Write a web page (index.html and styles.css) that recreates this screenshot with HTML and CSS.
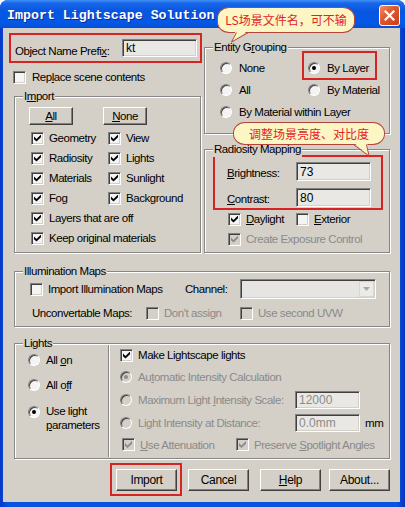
FILE: index.html
```html
<!DOCTYPE html>
<html>
<head>
<meta charset="utf-8">
<link rel="stylesheet" href="styles.css">
</head>
<body>
<div class="window">
  <div class="titlebar">
    <span class="title">Import Lightscape Solution</span>
    <span class="close"><svg width="11" height="11" viewBox="0 0 11 11"><path d="M1.5 1.5 L9.5 9.5 M9.5 1.5 L1.5 9.5" stroke="#fff" stroke-width="2.2" stroke-linecap="square"/></svg></span>
  </div>
  <div class="client">
    <div class="top">
      <div class="col-left">
        <div class="prefix">
          <span class="prefix-label">Object Name Prefi<u>x</u>:</span>
          <span class="edit prefix-edit">kt</span>
        </div>
        <div class="opt replace"><span class="cb"></span><span>Rep<u>l</u>ace scene contents</span></div>
        <div class="group g-import">
          <span class="legend">I<u>m</u>port</span>
          <div class="btn-row"><span class="btn small"><span><u>A</u>ll</span></span><span class="btn small"><span><u>N</u>one</span></span></div>
          <div class="import-grid">
            <div class="opt"><span class="cb on"></span><span>Geometry</span></div>
            <div class="opt"><span class="cb on"></span><span>View</span></div>
            <div class="opt"><span class="cb on"></span><span>Radiosity</span></div>
            <div class="opt"><span class="cb on"></span><span>Lights</span></div>
            <div class="opt"><span class="cb on"></span><span>Materials</span></div>
            <div class="opt"><span class="cb on"></span><span>Sunlight</span></div>
            <div class="opt"><span class="cb on"></span><span>Fog</span></div>
            <div class="opt"><span class="cb on"></span><span>Background</span></div>
            <div class="opt span2"><span class="cb on"></span><span>Layers that are off</span></div>
            <div class="opt span2"><span class="cb on"></span><span>Keep original materials</span></div>
          </div>
        </div>
      </div>
      <div class="col-right">
        <div class="group g-entity">
          <span class="legend">Entity G<u>r</u>ouping</span>
          <div class="radio-grid">
            <div class="ropt"><span class="rb"></span><span>None</span></div>
            <div class="ropt mark mark-layer"><span class="rb on"></span><span>By Layer</span></div>
            <div class="ropt"><span class="rb"></span><span>All</span></div>
            <div class="ropt"><span class="rb"></span><span>By Material</span></div>
            <div class="ropt span2"><span class="rb"></span><span>By Material within Layer</span></div>
          </div>
        </div>
        <div class="group g-rad">
          <span class="legend">Radiosity Mapping</span>
          <div class="rad-box">
            <span class="rlabel"><u>B</u>rightness:</span><span class="edit num">73</span>
            <span class="rlabel"><u>C</u>ontrast:</span><span class="edit num">80</span>
          </div>
          <div class="rad-checks">
            <div class="opt"><span class="cb on"></span><span><u>D</u>aylight</span></div>
            <div class="opt"><span class="cb"></span><span><u>E</u>xterior</span></div>
            <div class="opt span2 dis"><span class="cb on dis"></span><span>Create Exposure Control</span></div>
          </div>
        </div>
      </div>
    </div>

    <div class="group g-illum">
      <span class="legend">Illumination Maps</span>
      <div class="ill-row ill-row1">
        <div class="opt w155"><span class="cb"></span><span>Import Illumination Maps</span></div>
        <span class="w55">Channel:</span>
        <span class="combo"><span class="combo-btn"><svg width="7" height="4" viewBox="0 0 7 4"><path d="M0 0 H7 L3.5 4 Z" fill="#a8a8a8"/></svg></span></span>
      </div>
      <div class="ill-row ill-row2">
        <span class="w114">Unconvertable Maps:</span>
        <div class="opt dis w94"><span class="cb dis"></span><span>Don't assign</span></div>
        <div class="opt dis"><span class="cb dis"></span><span>Use second UVW</span></div>
      </div>
    </div>

    <div class="group g-lights">
      <span class="legend">Lights</span>
      <div class="lights-left">
        <div class="ropt l1"><span class="rb"></span><span>All <u>o</u>n</span></div>
        <div class="ropt l2"><span class="rb"></span><span>All o<u>f</u>f</span></div>
        <div class="ropt l3"><span class="rb on"></span><span>Use light<br><u>p</u>arameters</span></div>
      </div>
      <div class="lights-right">
        <div class="opt"><span class="cb on"></span><span>Make Lightscape lights</span></div>
        <div class="ropt dis"><span class="rb on dis"></span><span>Au<u>t</u>omatic Intensity Calculation</span></div>
        <div class="ropt dis"><span class="rb dis"></span><span class="w151">Maximum Light <u>I</u>ntensity Scale:</span><span class="edit dis-edit">12000</span></div>
        <div class="ropt dis"><span class="rb dis"></span><span class="w151">Light Intensity at Distance:</span><span class="edit dis-edit">0.0mm</span><span class="mm">mm</span></div>
        <div class="opt dis last"><span class="cb on dis"></span><span class="w91"><u>U</u>se Attenuation</span><span class="cb on dis"></span><span>Preserve <u>S</u>potlight Angles</span></div>
      </div>
    </div>

    <div class="buttons">
      <span class="btn big mark mark-import">Import</span>
      <span class="btn big">Cancel</span>
      <span class="btn big"><span><u>H</u>elp</span></span>
      <span class="btn big">About...</span>
    </div>
  </div>

  <div class="callout c1">LS场景文件名，可不输</div>
  <svg class="tail t1" width="30" height="15" viewBox="0 0 30 15"><path d="M11 0 H24 L6.5 12 Z" fill="#fcf6c4"/><path d="M11.5 2.5 L6.5 12 L23.5 2.5" fill="none" stroke="#b5443a" stroke-width="1"/></svg>
  <div class="callout c2">调整场景亮度、对比度</div>
  <svg class="tail t2" width="25" height="16" viewBox="0 0 25 16"><path d="M3 0 H17 L19 14 Z" fill="#fcf6c4"/><path d="M3.5 2.5 L19 14 L16.5 2.5" fill="none" stroke="#b5443a" stroke-width="1"/></svg>
</div>
</body>
</html>
```

FILE: styles.css
```css
html, body {
  margin: 0;
  padding: 0;
  background: #fff;
}

.window {
  position: relative;
  width: 405px;
  height: 507px;
  background: linear-gradient(to right, #0639c8, #0a52e0 2%, #0a52e0 98%, #0634bd);
  border-radius: 8px 8px 0 0;
  display: flex;
  flex-direction: column;
  overflow: hidden;
  font-family: "Liberation Sans", Arial, sans-serif;
  font-size: 11.5px;
  letter-spacing: -0.45px;
  color: #000;
  white-space: nowrap;
}

.titlebar {
  height: 28px;
  flex: none;
  box-sizing: border-box;
  display: flex;
  align-items: flex-start;
  justify-content: space-between;
  padding: 5px 5px 0 7px;
  background: linear-gradient(to bottom, #3f8ff7 0%, #1866e8 12%, #0656e0 40%, #0558e6 80%, #0650d8 100%);
  letter-spacing: 0;
}

.title {
  font-family: "Liberation Mono", monospace;
  font-weight: bold;
  font-size: 13.3px;
  line-height: 21px;
  color: #fff;
  text-shadow: 1px 1px 0 #0b2c9a;
}

.close {
  width: 21px;
  height: 21px;
  box-sizing: border-box;
  border: 1px solid #fff;
  border-radius: 3px;
  background: linear-gradient(135deg, #f08a62 0%, #e0562c 45%, #c93e1a 100%);
  display: flex;
  align-items: center;
  justify-content: center;
}

.client {
  flex: 1;
  margin: 0 5px 5px 3px;
  background: #d4d0c8;
  display: flex;
  flex-direction: column;
}

u { text-decoration: underline; text-underline-offset: 1px; }

/* top area */
.top {
  display: grid;
  grid-template-columns: 193px 186px;
  column-gap: 2px;
  padding-left: 6px;
}

.prefix {
  margin-top: 5px;
  height: 30px;
  box-sizing: border-box;
  border: 2px solid #d62424;
  display: flex;
  align-items: center;
  padding: 0 3px 0 4px;
}
.prefix-label { padding-top: 6px; }
.prefix-edit {
  margin-left: auto;
  width: 75px;
  height: 18px;
}

/* controls */
.cb {
  position: relative;
  flex: none;
  width: 13px;
  height: 13px;
  box-sizing: border-box;
  background: #f4f4f4;
  border: 1px solid;
  border-color: #808080 #ffffff #ffffff #808080;
  box-shadow: inset 1px 1px 0 #404040, inset -1px -1px 0 #d4d0c8;
}
.cb.on::after {
  content: "";
  position: absolute;
  left: 2px;
  top: 2px;
  width: 7px;
  height: 7px;
  background: #000;
  clip-path: polygon(0 2px, 2.5px 4.5px, 7px 0, 7px 2.8px, 2.5px 7px, 0 4.8px);
}
.cb.dis { background: #d4d0c8; }
.cb.dis.on::after { background: #8a8a8a; }

.rb {
  position: relative;
  flex: none;
  width: 12px;
  height: 12px;
  box-sizing: border-box;
  border-radius: 50%;
  background: #f4f4f4;
  border: 1px solid;
  border-color: #808080 #ffffff #ffffff #808080;
  box-shadow: inset 1px 1px 0 #404040;
}
.rb.on::after {
  content: "";
  position: absolute;
  left: 3px;
  top: 3px;
  width: 4px;
  height: 4px;
  border-radius: 50%;
  background: #000;
}
.rb.dis { background: #d4d0c8; }
.rb.dis.on::after { background: #8a8a8a; }

.edit {
  box-sizing: border-box;
  display: flex;
  align-items: flex-end;
  background: #e9e8e5;
  border: 1px solid;
  border-color: #808080 #ffffff #ffffff #808080;
  box-shadow: inset 1px 1px 0 #404040, inset -1px -1px 0 #d4d0c8;
  padding: 0 3px 1px 3px;
  font-size: 12px;
  letter-spacing: 0;
}
.num { width: 75px; height: 19px; }
.dis-edit { width: 65px; height: 18px; color: #8a8a8a; }

.btn {
  box-sizing: border-box;
  display: flex;
  align-items: center;
  justify-content: center;
  background: #d4d0c8;
  border: 1px solid;
  border-color: #ffffff #404040 #404040 #ffffff;
  box-shadow: inset -1px -1px 0 #808080;
}
.btn.small { width: 44px; height: 18px; }
.btn.big { width: 61px; height: 22px; }

.opt, .ropt {
  display: flex;
  align-items: center;
  gap: 5px;
}
.ropt { gap: 7px; }
.span2 { grid-column: span 2; }
.dis { color: #8a8a8a; }

.replace {
  margin-top: 7px;
  height: 14px;
  gap: 6px;
  padding-left: 4px;
}

/* group boxes */
.group {
  position: relative;
  box-sizing: border-box;
  border: 1px solid #868686;
  box-shadow: inset 1px 1px 0 #ffffff, 1px 1px 0 #ffffff;
}
.legend {
  position: absolute;
  top: -8px;
  left: 8px;
  padding: 0 1px;
  line-height: 15px;
  background: #d4d0c8;
}

.g-import {
  margin: 12px 0 0 5px;
  width: 187px;
  height: 157px;
}
.btn-row {
  display: flex;
  gap: 30px;
  padding: 10px 0 0 14px;
}
.import-grid {
  display: grid;
  grid-template-columns: 77px auto;
  grid-auto-rows: 20px;
  margin-top: 3px;
  padding-left: 16px;
}

.g-entity {
  margin-top: 19px;
  height: 87px;
}
.radio-grid {
  display: grid;
  grid-template-columns: 88px auto;
  grid-auto-rows: 22px;
  padding: 9px 0 0 15px;
}

.mark { position: relative; }
.mark::after {
  content: "";
  position: absolute;
  border: 2px solid #d62424;
  pointer-events: none;
}
.mark-layer::after { left: -6px; top: -6px; right: 12px; bottom: -1px; }
.mark-import::after { left: -7px; top: -7px; right: -6px; bottom: -6px; }

.g-rad {
  margin-top: 15px;
  height: 104px;
}
.rad-box {
  margin: 5px 0 0 8px;
  width: 170px;
  height: 55px;
  box-sizing: border-box;
  border: 2px solid #d62424;
  padding: 5px 0 0 12px;
  display: grid;
  grid-template-columns: 69px 75px;
  grid-auto-rows: 19px;
  row-gap: 7px;
  align-items: center;
}
.rlabel { padding-top: 3px; }
.rad-checks {
  display: grid;
  grid-template-columns: 68px auto;
  grid-auto-rows: 20px;
  margin-top: -1px;
  padding-left: 23px;
}

/* illumination */
.g-illum {
  margin: 18px 10px 0 11px;
  height: 56px;
}
.ill-row {
  display: flex;
  align-items: center;
  height: 20px;
}
.ill-row1 { margin-top: 7px; padding-left: 15px; }
.ill-row2 { margin-top: 4px; padding-left: 17px; }
.w155 { width: 155px; flex: none; }
.w55 { width: 55px; flex: none; }
.w114 { width: 114px; flex: none; }
.w94 { width: 94px; flex: none; }
.combo {
  width: 136px;
  height: 20px;
  box-sizing: border-box;
  display: flex;
  justify-content: flex-end;
  align-items: center;
  padding-right: 1px;
  background: #e6e5e2;
  border: 1px solid;
  border-color: #808080 #ffffff #ffffff #808080;
  box-shadow: inset 1px 1px 0 #404040, inset -1px -1px 0 #d4d0c8;
}
.combo-btn {
  width: 15px;
  height: 16px;
  box-sizing: border-box;
  display: flex;
  align-items: center;
  justify-content: center;
  background: #ecebe8;
  border: 1px solid #d8d6d0;
}

/* lights */
.g-lights {
  margin: 16px 10px 0 11px;
  height: 116px;
  display: flex;
}
.lights-left {
  width: 93px;
  flex: none;
  padding: 9px 0 0 13px;
  box-sizing: border-box;
  display: flex;
  flex-direction: column;
}
.lights-left .ropt { gap: 6px; line-height: 14px; }
.l2 { margin-top: 11px; }
.lights-left .l3 { margin-top: 13px; align-items: flex-start; line-height: 13.5px; }
.l3 .rb { margin-top: 1px; }
.lights-right {
  flex: 1;
  margin: 1px 0;
  border-left: 1px solid #868686;
  box-shadow: inset 1px 0 0 #ffffff;
  padding-left: 11px;
  display: grid;
  grid-template-rows: 20px 23px 23px 23px 21px;
}
.lights-right .ropt { gap: 6px; }
.w151 { width: 151px; flex: none; }
.mm { margin-left: -1px; color: #000; }
.last { padding-left: 2px; }
.w91 { width: 91px; flex: none; }

/* bottom buttons */
.buttons {
  display: flex;
  justify-content: flex-end;
  margin-top: 10px;
  padding-right: 10px;
  gap: 11px;
  font-size: 12px;
  letter-spacing: -0.3px;
}
.buttons .btn:last-child { margin-left: -3px; }

/* callouts */
.callout {
  position: absolute;
  box-sizing: border-box;
  display: flex;
  align-items: center;
  justify-content: center;
  background: #fcf6c4;
  border: 1px solid #b5443a;
  border-radius: 12px / 11px;
  color: #e4231f;
  font-family: "Noto Sans CJK SC", sans-serif;
  font-size: 12px;
  letter-spacing: 0;
  line-height: 1;
}
.c1 { left: 217px; top: 7px; width: 138px; height: 26px; }
.c2 { left: 233px; top: 122px; width: 152px; height: 23px; }
.tail { position: absolute; }
.t1 { left: 225px; top: 30px; }
.t2 { left: 350px; top: 142px; }
```
